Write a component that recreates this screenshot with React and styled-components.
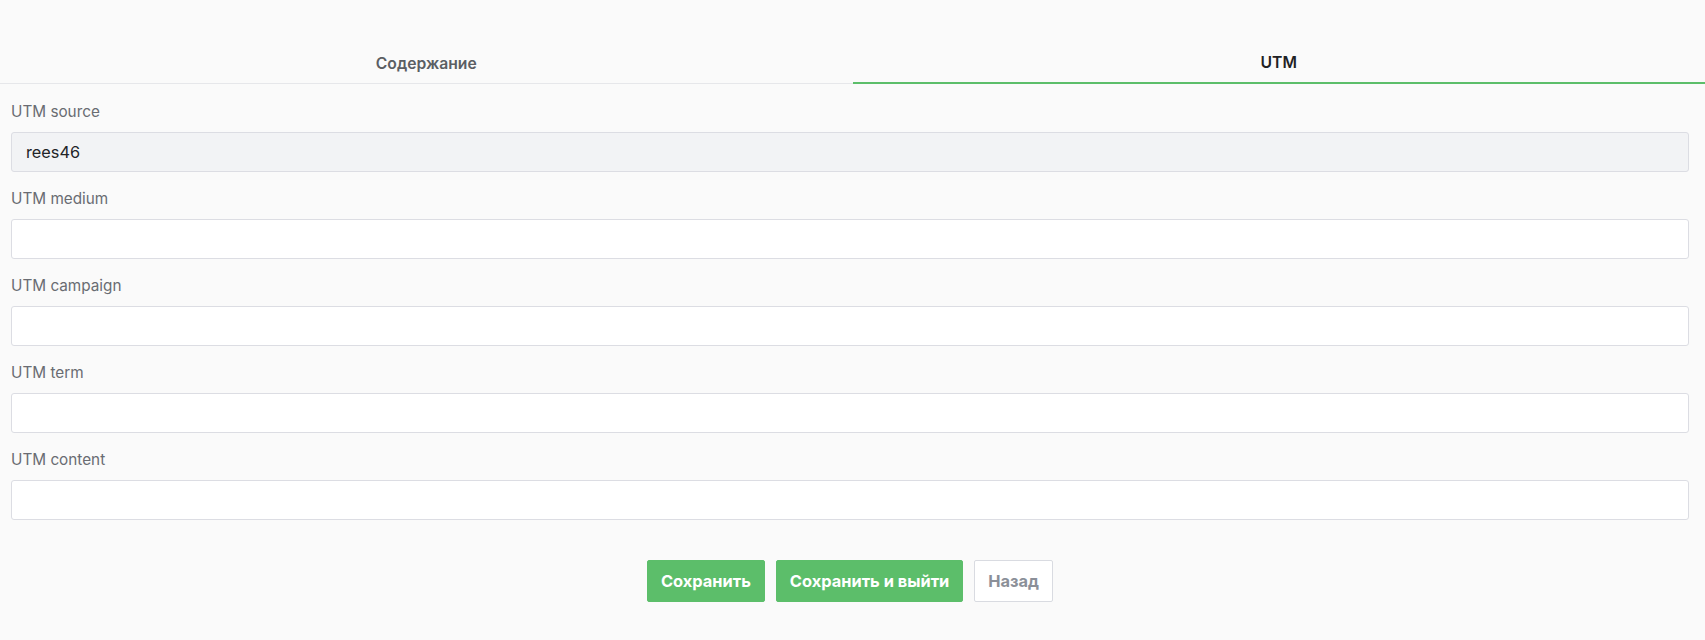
import React, { useState } from "react";
import styled, { createGlobalStyle } from "styled-components";

const GlobalStyle = createGlobalStyle`
  html, body {
    margin: 0;
    padding: 0;
    background: #fafafa;
  }
  body {
    font-family: Inter, "Noto Sans", "Liberation Sans", sans-serif;
  }
`;

const Page = styled.div`
  min-height: 640px;
  padding-top: 43px;
  background: #fafafa;
  box-sizing: border-box;
`;

const Tabs = styled.div`
  display: flex;
`;

const Tab = styled.button`
  flex: 1;
  height: 41px;
  padding: 0;
  border: none;
  background: transparent;
  font-family: inherit;
  font-size: 15.7px;
  font-weight: 600;
  cursor: pointer;
  color: ${(p) => (p.active ? "#1f2124" : "#5b5e63")};
  border-bottom: ${(p) => (p.active ? "2px solid #5cbe6a" : "1px solid #e6e7ea")};
  box-sizing: border-box;
`;

const Form = styled.div`
  padding: 18px 16px 0 11px;
`;

const Field = styled.div`
  display: flex;
  flex-direction: column;
  margin-bottom: 17px;
`;

const Label = styled.label`
  font-size: 15.3px;
  line-height: 20px;
  color: #696c72;
  margin-bottom: 10px;
`;

const Input = styled.input`
  height: 40px;
  box-sizing: border-box;
  padding: 0 14px;
  border: 1px solid #dcdde3;
  border-radius: 3px;
  background: ${(p) => (p.disabled ? "#f2f3f5" : "#ffffff")};
  font-family: inherit;
  font-size: 16.3px;
  color: #222428;
  outline: none;
  &:disabled {
    color: #222428;
    -webkit-text-fill-color: #222428;
  }
`;

const Actions = styled.div`
  display: flex;
  justify-content: center;
  gap: 11px;
  padding-top: 23px;
`;

const Button = styled.button`
  height: 42px;
  padding: 0 13px;
  border-radius: 2px;
  font-family: inherit;
  font-size: 16.4px;
  font-weight: 700;
  cursor: pointer;
  border: 1px solid ${(p) => (p.secondary ? "#d9dbe1" : "#5cbe6a")};
  background: ${(p) => (p.secondary ? "#ffffff" : "#5cbe6a")};
  color: ${(p) => (p.secondary ? "#8b8f98" : "#ffffff")};
`;

const fields = [
  { name: "source", label: "UTM source", value: "rees46", disabled: true },
  { name: "medium", label: "UTM medium", value: "" },
  { name: "campaign", label: "UTM campaign", value: "" },
  { name: "term", label: "UTM term", value: "" },
  { name: "content", label: "UTM content", value: "" },
];

const App = () => {
  const [tab, setTab] = useState("utm");

  return (
    <Page>
      <GlobalStyle />
      <Tabs>
        <Tab active={tab === "content"} onClick={() => setTab("content")}>
          Содержание
        </Tab>
        <Tab active={tab === "utm"} onClick={() => setTab("utm")}>
          UTM
        </Tab>
      </Tabs>
      <Form>
        {fields.map((f) => (
          <Field key={f.name}>
            <Label>{f.label}</Label>
            <Input defaultValue={f.value} disabled={f.disabled} />
          </Field>
        ))}
        <Actions>
          <Button>Сохранить</Button>
          <Button>Сохранить и выйти</Button>
          <Button secondary>Назад</Button>
        </Actions>
      </Form>
    </Page>
  );
};

export default App;
